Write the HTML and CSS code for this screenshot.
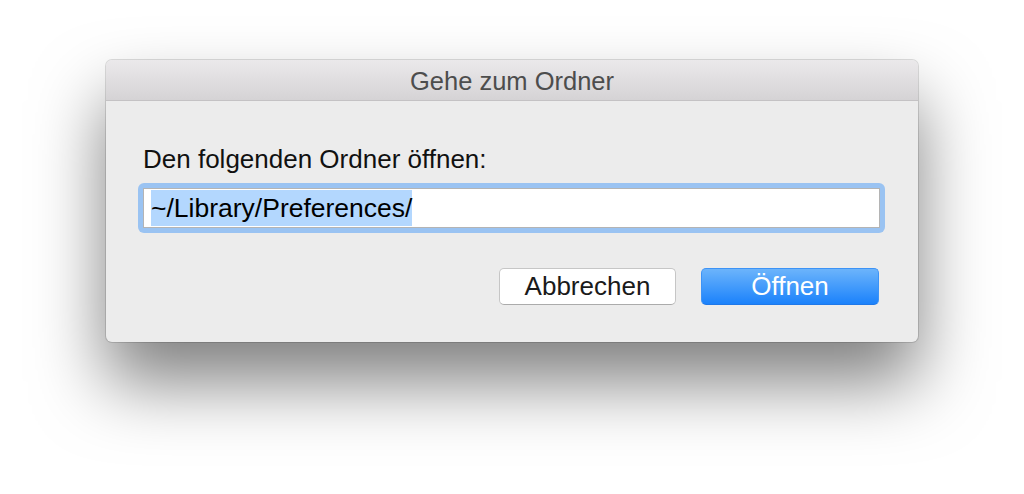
FILE: index.html
```html
<!DOCTYPE html>
<html lang="de">
<head>
<meta charset="utf-8">
<title>Gehe zum Ordner</title>
<link rel="stylesheet" href="styles.css">
</head>
<body>
<div class="window">
  <div class="titlebar">Gehe zum Ordner</div>
  <div class="content">
    <div class="label">Den folgenden Ordner öffnen:</div>
    <div class="ring">
      <div class="field"><span class="sel">~/Library/Preferences/</span></div>
    </div>
    <div class="buttons">
      <div class="btn btn-cancel">Abbrechen</div>
      <div class="btn btn-ok">Öffnen</div>
    </div>
  </div>
</div>
</body>
</html>
```
FILE: styles.css
```css
html, body {
  margin: 0;
  background: #ffffff;
}
body {
  padding: 60px 0 0 106px;
  font-family: "Liberation Sans", Arial, sans-serif;
  height: 494px;
  box-sizing: border-box;
  overflow: hidden;
}
.window {
  width: 812px;
  box-sizing: border-box;
  background: #ececec;
  border-radius: 6px;
  box-shadow: 0 0 0 1px rgba(0,0,0,0.13), 0 40px 70px rgba(0,0,0,0.5);
  display: flex;
  flex-direction: column;
}
.titlebar {
  height: 41px;
  box-sizing: border-box;
  padding-top: 3px;
  border-bottom: 1px solid #c4c2c4;
  border-radius: 6px 6px 0 0;
  background: linear-gradient(#ebe9eb, #d5d3d5);
  color: #4d4d4d;
  font-size: 25.5px;
  display: flex;
  align-items: center;
  justify-content: center;
}
.content {
  padding: 43px 33px 37px 32px;
  display: flex;
  flex-direction: column;
}
.label {
  font-size: 26px;
  line-height: 30px;
  color: #111;
  padding-left: 5px;
}
.ring {
  margin-top: 9px;
  padding: 5px;
  border-radius: 6px;
  background: #9ac3f2;
}
.field {
  background: #fff;
  border: 1px solid #b4b4b4;
  padding: 1px 7px;
  display: flex;
}
.sel {
  display: inline-block;
  background: #b3d7fe;
  font-size: 26.5px;
  line-height: 36px;
  color: #000;
}
.buttons {
  margin-top: 35px;
  display: flex;
  justify-content: flex-end;
  gap: 25px;
  padding-right: 6px;
}
.btn {
  width: 177px;
  height: 37px;
  box-sizing: border-box;
  border-radius: 5px;
  font-size: 26px;
  display: flex;
  align-items: center;
  justify-content: center;
}
.btn-cancel {
  background: #ffffff;
  border: 1px solid #c6c6c6;
  border-bottom-color: #ababab;
  color: #1a1a1a;
}
.btn-ok {
  width: 178px;
  background: linear-gradient(#6cb4fb, #1b82fb);
  border: 1px solid #3d93f6;
  border-bottom-color: #1f78e8;
  color: #ffffff;
}
```
